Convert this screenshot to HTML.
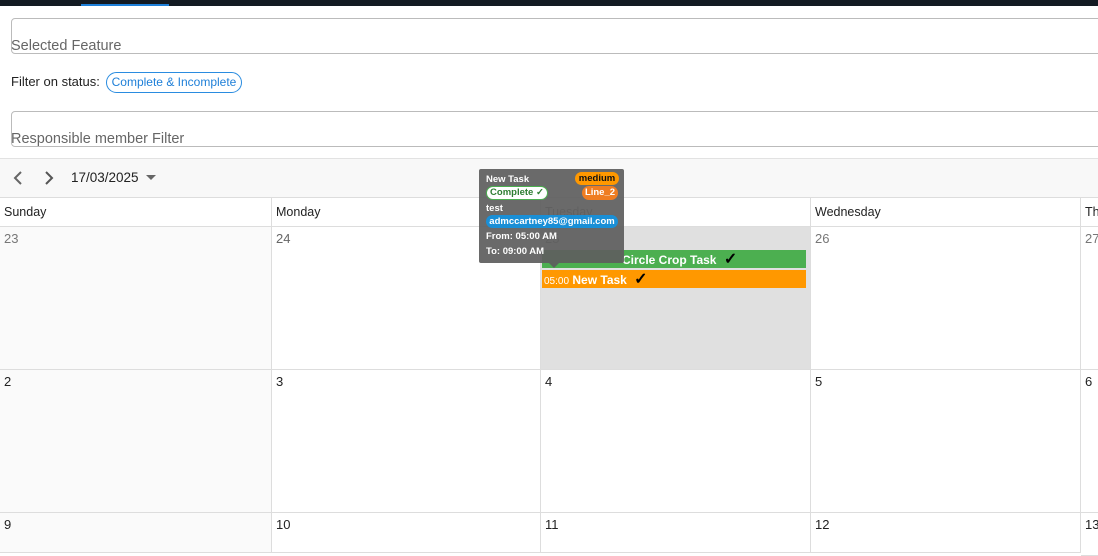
<!DOCTYPE html>
<html><head><style>
*{box-sizing:border-box;margin:0;padding:0}
body{width:1098px;height:544px;overflow:hidden;background:#fff;font-family:"Liberation Sans",Arial,sans-serif;position:relative;color:#222}
.abs{position:absolute}
.field{position:absolute;left:11px;width:1100px;height:36px;border:1px solid #bbb;border-radius:4px}
.field span{position:absolute;left:-1px;bottom:-1px;font-size:14.5px;color:#666}
.cell{position:absolute;border-right:1px solid #ddd;border-bottom:1px solid #ddd;font-size:13px;padding:4px 4px}
</style></head><body>
<div class="abs" style="left:0;top:0;width:1098px;height:6px;background:#131a22"></div>
<div class="abs" style="left:81px;top:4px;width:88px;height:2px;background:#1e7fd8"></div>
<div class="field" style="top:18px"><span>Selected Feature</span></div>
<div class="abs" style="left:11px;top:74px;font-size:13px;color:#222">Filter on status:</div>
<div class="abs" style="left:106px;top:72px;height:21px;width:136px;border:1px solid #2a8ce0;border-radius:11px;color:#1e7fd8;font-size:12px;line-height:19px;text-align:center">Complete &amp; Incomplete</div>
<div class="field" style="top:111px"><span>Responsible member Filter</span></div>
<div class="abs" style="left:0;top:158px;width:1098px;height:40px;background:#f8f8f8;border-top:1px solid #e2e2e2;border-bottom:1px solid #ddd"></div>
<svg class="abs" style="left:13px;top:170px" width="50" height="16"><path d="M8 2 L2 8 L8 14" stroke="#666" stroke-width="2" fill="none"/><path d="M33 2 L39 8 L33 14" stroke="#555" stroke-width="2" fill="none"/></svg>
<div class="abs" style="left:71px;top:170px;font-size:13.5px;color:#222">17/03/2025</div>
<div class="abs" style="left:146px;top:175px;border-left:5px solid transparent;border-right:5px solid transparent;border-top:5px solid #666"></div>

<div class="cell" style="left:0;top:198px;width:272px;height:29px;padding-top:7px;font-size:12.5px">Sunday</div>
<div class="cell" style="left:272px;top:198px;width:269px;height:29px;padding-top:7px;font-size:12.5px">Monday</div>
<div class="cell" style="left:541px;top:198px;width:270px;height:29px;padding-top:7px;font-size:12.5px;color:#777">Tuesday</div>
<div class="cell" style="left:811px;top:198px;width:270px;height:29px;padding-top:7px;font-size:12.5px">Wednesday</div>
<div class="cell" style="left:1081px;top:198px;width:30px;height:29px;padding-top:7px;font-size:12.5px">Thursday</div>

<div class="cell" style="left:0;top:227px;width:272px;height:143px;background:#fafafa;color:#777">23</div>
<div class="cell" style="left:272px;top:227px;width:269px;height:143px;color:#666">24</div>
<div class="cell" style="left:541px;top:227px;width:270px;height:143px;background:#e0e0e0;color:#777">25</div>
<div class="cell" style="left:811px;top:227px;width:270px;height:143px;color:#777">26</div>
<div class="cell" style="left:1081px;top:227px;width:30px;height:143px;color:#777">27</div>

<div class="cell" style="left:0;top:370px;width:272px;height:143px;background:#fafafa">2</div>
<div class="cell" style="left:272px;top:370px;width:269px;height:143px">3</div>
<div class="cell" style="left:541px;top:370px;width:270px;height:143px">4</div>
<div class="cell" style="left:811px;top:370px;width:270px;height:143px">5</div>
<div class="cell" style="left:1081px;top:370px;width:30px;height:143px">6</div>

<div class="cell" style="left:0;top:513px;width:272px;height:40px;background:#fafafa">9</div>
<div class="cell" style="left:272px;top:513px;width:269px;height:40px">10</div>
<div class="cell" style="left:541px;top:513px;width:270px;height:40px">11</div>
<div class="cell" style="left:811px;top:513px;width:270px;height:40px">12</div>
<div class="cell" style="left:1081px;top:513px;width:30px;height:43px">13</div>

<div class="abs" style="left:542px;top:250px;width:264px;height:18px;background:#4caf50;color:#fff;font-size:12px;font-weight:bold;line-height:20px;padding-left:80px">Circle Crop Task <span style="color:#000;font-size:16px;margin-left:4px">✓</span></div>
<div class="abs" style="left:542px;top:270px;width:264px;height:18px;background:#ff9800;color:#fff;font-size:12px;font-weight:bold;line-height:20px;padding-left:2px"><span style="font-weight:normal;font-size:10px">05:00</span> New Task <span style="color:#000;font-size:16px;margin-left:4px">✓</span></div>

<div class="abs" style="left:479px;top:169px;width:145px;height:94px;background:rgba(95,95,95,0.93);border-radius:2px"></div>
<div class="abs" style="left:549px;top:263px;border-left:5px solid transparent;border-right:5px solid transparent;border-top:5px solid rgba(95,95,95,0.93)"></div>
<div class="abs" style="left:486px;top:174px;color:#fff;font-size:9.5px;font-weight:bold">New Task</div>
<div class="abs" style="left:575px;top:172px;width:44px;height:13px;background:#ff9800;border-radius:7px;color:#111;font-size:9.5px;font-weight:bold;text-align:center;line-height:13px">medium</div>
<div class="abs" style="left:486px;top:186px;width:62px;height:14px;background:#fff;border:1px solid #4caf50;border-radius:7px;color:#2e7d32;font-size:9.5px;font-weight:bold;text-align:center;line-height:12px">Complete ✓</div>
<div class="abs" style="left:582px;top:186px;width:36px;height:14px;background:#ef7d22;border-radius:7px;color:#fff;font-size:9.5px;font-weight:bold;text-align:center;line-height:14px">Line_2</div>
<div class="abs" style="left:486px;top:203px;color:#fff;font-size:9.5px;font-weight:bold">test</div>
<div class="abs" style="left:486px;top:215px;width:132px;height:13px;background:#1a8fd6;border-radius:7px;color:#fff;font-size:9.5px;font-weight:bold;text-align:center;line-height:13px">admccartney85@gmail.com</div>
<div class="abs" style="left:486px;top:231px;color:#fff;font-size:9.5px;font-weight:bold">From: 05:00 AM</div>
<div class="abs" style="left:486px;top:246px;color:#fff;font-size:9.5px;font-weight:bold">To: 09:00 AM</div>
</body></html>
